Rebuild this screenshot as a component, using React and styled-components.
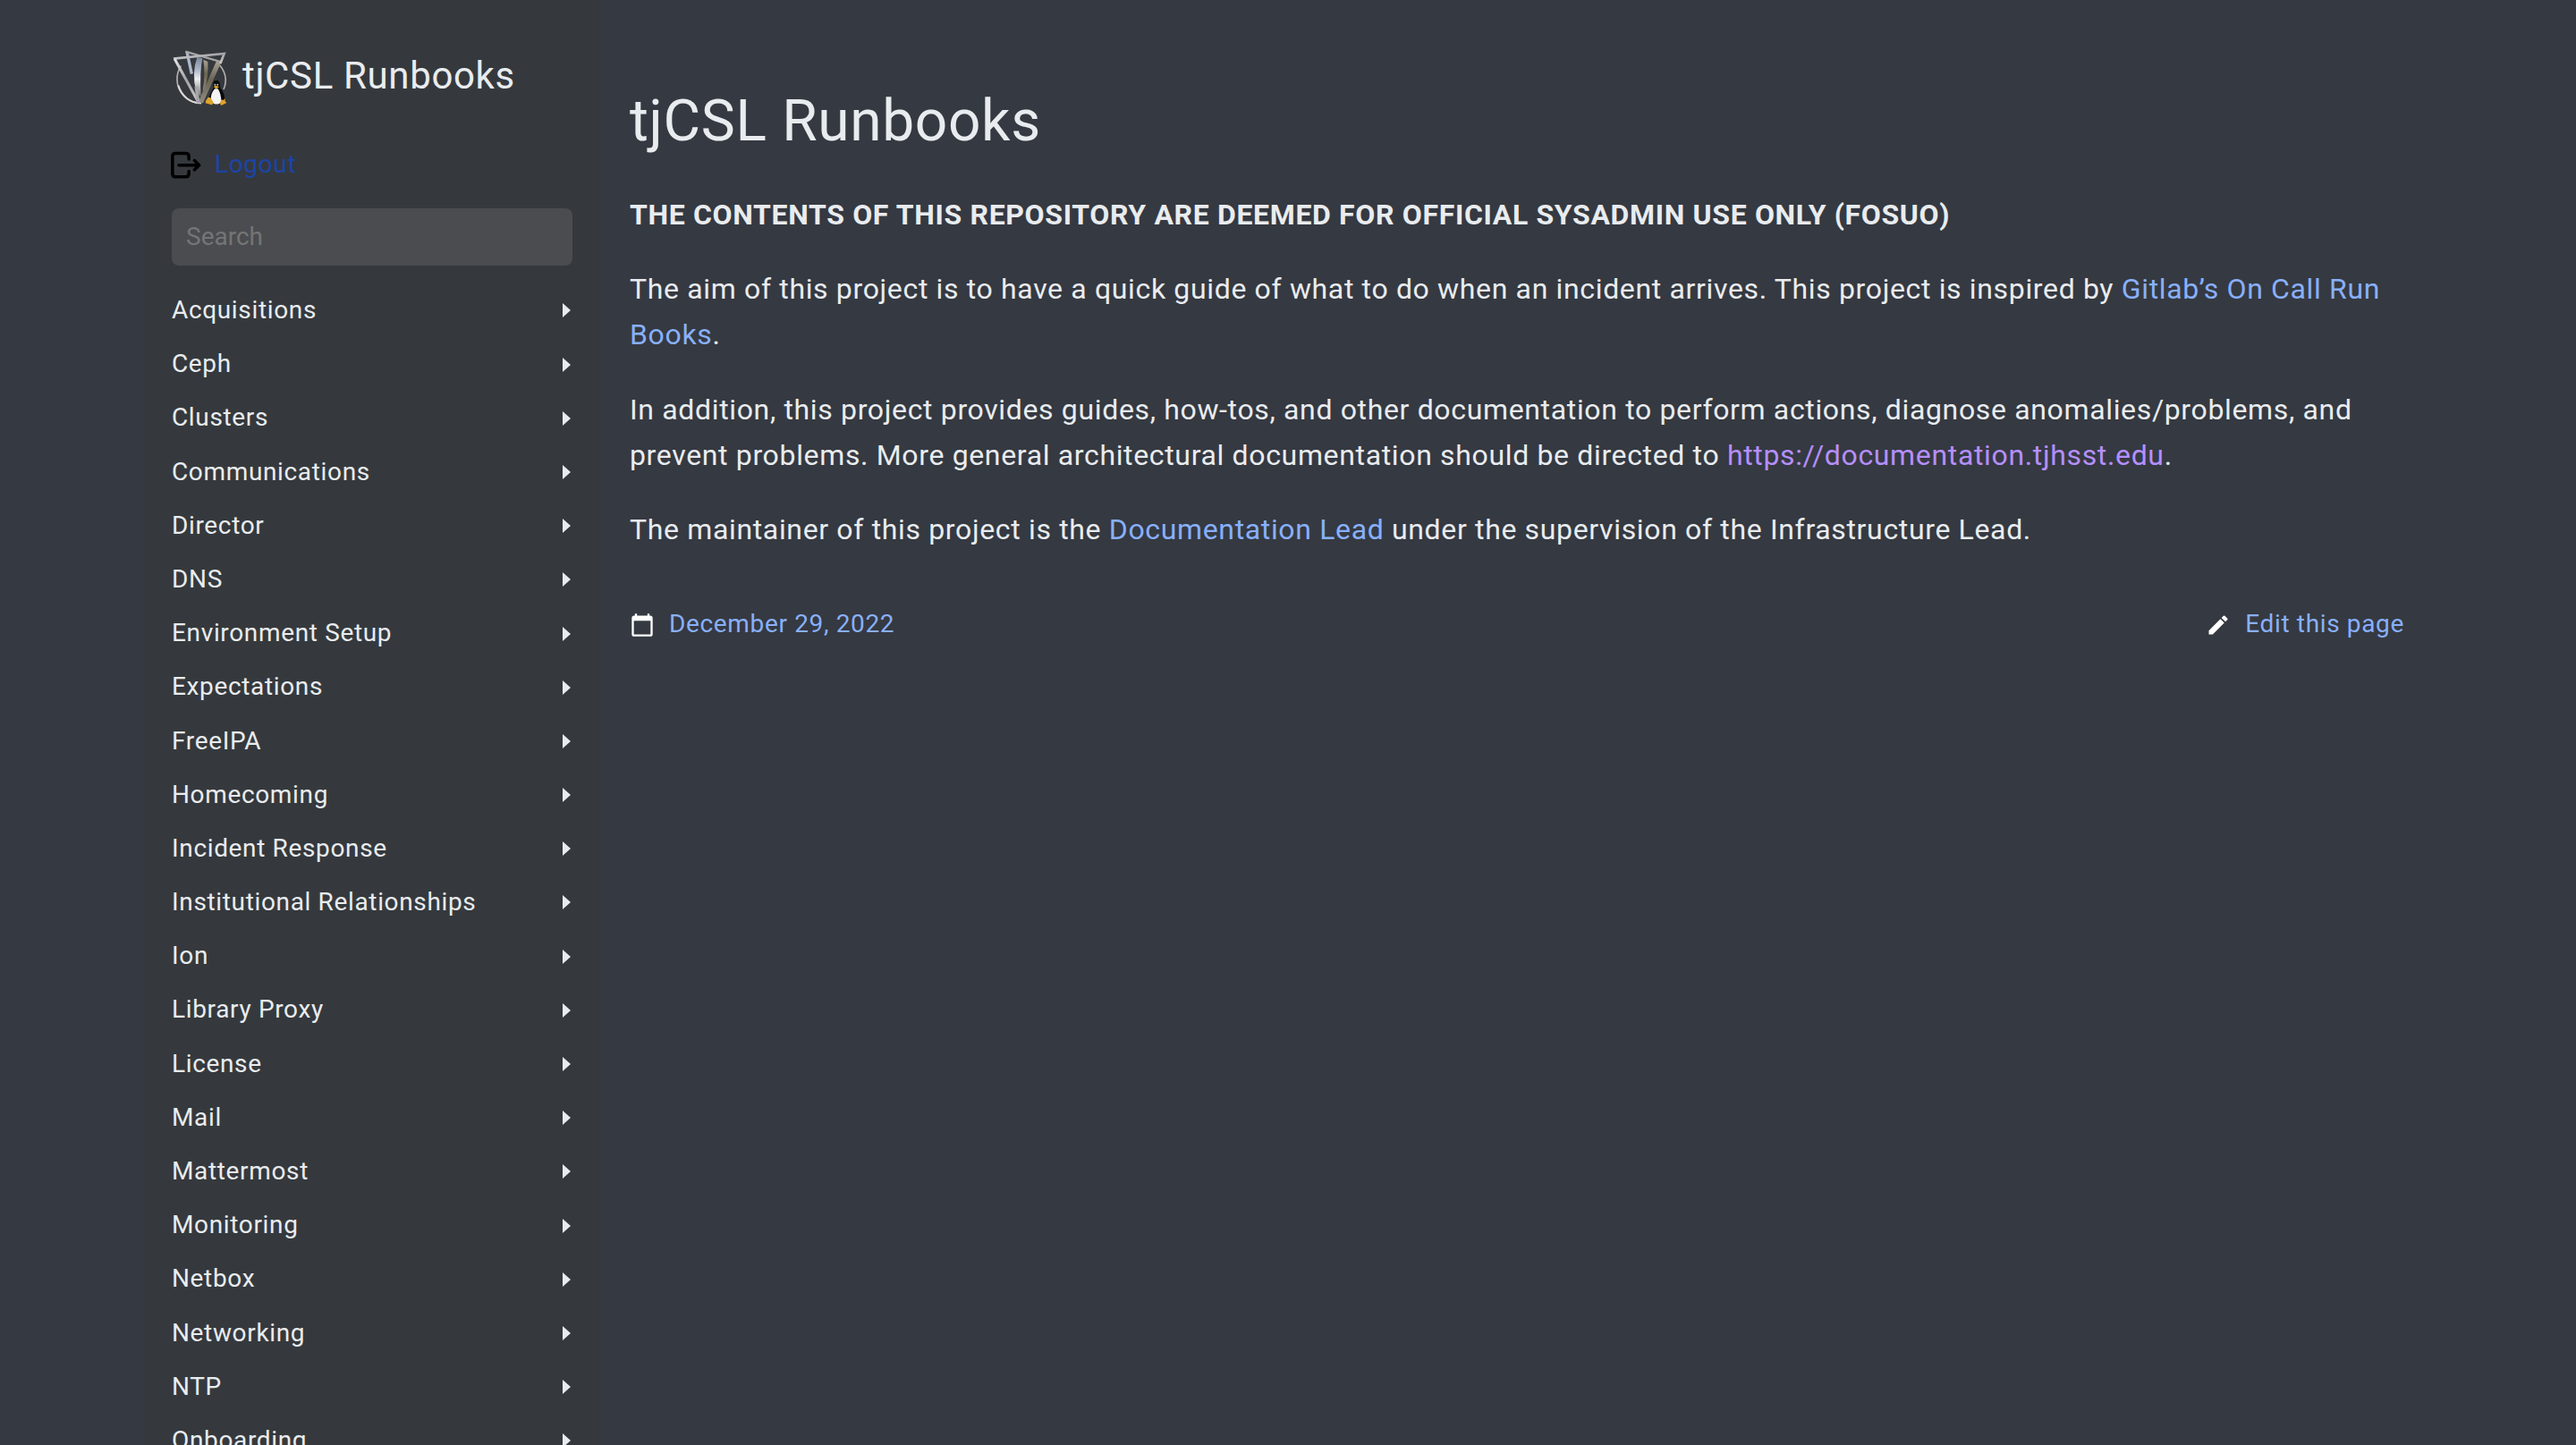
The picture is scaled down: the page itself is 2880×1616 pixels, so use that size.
import React from "react";
import styled, { createGlobalStyle } from "styled-components";

const GlobalStyle = createGlobalStyle`
  *, *::before, *::after { box-sizing: border-box; }
  html { font-size: 32px; }
  body {
    margin: 0;
    height: 1616px;
    overflow: hidden;
    background: #353941;
    color: #e9ecef;
    font-family: Roboto, "Open Sans", sans-serif;
    font-weight: 400;
    letter-spacing: 0.65px;
    line-height: 1.6;
  }
`;

const Page = styled.main`
  display: flex;
  width: 2560px;
  height: 1616px;
  margin: 0 auto;
  overflow: hidden;
`;

const Sidebar = styled.aside`
  flex: 0 0 512px;
  padding: 32px;
  font-size: 28px;
  background: #35393d;
`;

const Brand = styled.h2`
  display: flex;
  align-items: center;
  gap: 17px;
  margin: 16px 0 0;
  height: 74px;
  font-size: 42px;
  font-weight: 400;
  line-height: 74px;
  svg { margin-top: 2px; }
`;

const Logout = styled.a`
  display: flex;
  align-items: center;
  gap: 15px;
  height: 45px;
  margin: 40px 0 0 -1px;
  color: #1c44a8;
`;

const Search = styled.input`
  display: block;
  width: 100%;
  height: 64px;
  margin: 26px 0 28px;
  padding: 0 16px 2px;
  border: 0;
  border-radius: 8px;
  background: #4a4c50;
  font: 400 28px Roboto, sans-serif;
  &::placeholder { color: #757575; opacity: 1; }
`;

const Menu = styled.ul`
  margin: 0;
  padding: 0;
  list-style: none;
`;

const MenuRow = styled.li`
  display: flex;
  align-items: center;
  justify-content: space-between;
  height: 44.8px;
  margin-bottom: 15.4px;
  padding-right: 2px;
`;

const Arrow = styled.span`
  width: 0;
  height: 0;
  border-left: 9px solid #e9ecef;
  border-top: 8px solid transparent;
  border-bottom: 8px solid transparent;
`;

const Content = styled.article`
  flex: 1;
  padding: 32px;
  font-size: 32px;
`;

const Title = styled.h1`
  margin: 56px 0 0;
  font-size: 64px;
  font-weight: 400;
  line-height: 96px;
`;

const Paragraph = styled.p`
  margin: ${(p) => (p.$lead ? "31px" : "32px")} 0 32px;
`;

const Link = styled.a`
  color: ${(p) => (p.$visited ? "#b58ffc" : "#88b0fb")};
`;

const Footer = styled.footer`
  display: flex;
  justify-content: space-between;
  margin-top: 57px;
  font-size: 28px;
  line-height: 45px;
`;

const FooterItem = styled.div`
  display: flex;
  align-items: center;
  gap: 16px;
  svg { margin-top: 2px; }
`;

const names = [
  "Acquisitions", "Ceph", "Clusters", "Communications", "Director", "DNS",
  "Environment Setup", "Expectations", "FreeIPA", "Homecoming",
  "Incident Response", "Institutional Relationships", "Ion", "Library Proxy",
  "License", "Mail", "Mattermost", "Monitoring", "Netbox", "Networking",
  "NTP", "Onboarding",
];

const Logo = () => (
  <svg width="62" height="64" viewBox="21 27 186 192" fill="none">
    <defs>
      <linearGradient id="steel" x1="0" y1="0" x2="1" y2="1">
        <stop offset="0" stopColor="#e4e5e8" />
        <stop offset="0.5" stopColor="#a3a3a7" />
        <stop offset="1" stopColor="#cfcdca" />
      </linearGradient>
      <linearGradient id="band" x1="0" y1="0" x2="0" y2="1">
        <stop offset="0" stopColor="#7d8798" />
        <stop offset="0.3" stopColor="#a9b4c6" />
        <stop offset="0.55" stopColor="#eceef1" />
        <stop offset="1" stopColor="#77726a" />
      </linearGradient>
      <linearGradient id="bronze" x1="0" y1="0" x2="0" y2="1">
        <stop offset="0" stopColor="#aaa499" />
        <stop offset="0.45" stopColor="#6b6452" />
        <stop offset="1" stopColor="#8f8b80" />
      </linearGradient>
    </defs>
    <path d="M52 86A81 81 0 0 0 39 132C39 169 72 212 120 212M182 84A81 81 0 0 1 202 132Q202 150 195 165" stroke="#b3afaf" strokeWidth="5" />
    <path d="M43 152C54 188 82 211 120 210" stroke="#dfd9dc" strokeWidth="6" />
    <path d="M72 39L88 113" stroke="#aeb8ca" strokeWidth="10" />
    <path d="M67 38L184 72" stroke="#a8a7a8" strokeWidth="7" />
    <path d="M127 65L142 72C144 102 141 131 133 159L125 172Q134 108 127 65Z" fill="url(#bronze)" />
    <path d="M170 72L190 67L126 211L109 209Z" fill="url(#bronze)" />
    <path d="M106 57L124 60Q114 106 119 190L102 172Q88 108 106 57Z" fill="url(#band)" />
    <path d="M27 62L197 45L184 78" stroke="url(#steel)" strokeWidth="8" />
    <path d="M31 63L110 207" stroke="url(#steel)" strokeWidth="9" />
    <path d="M103 155L110 211" stroke="#a5a5a9" strokeWidth="11" />
    <path d="M172 135C160 133 158 145 161 159C155 174 144 184 148 205C160 217 187 220 197 207C202 188 193 171 184 161C183 145 183 137 172 135Z" fill="#08090b" />
    <path d="M165 163C155 176 149 189 155 206C164 218 181 217 187 206C187 188 183 174 176 163Z" fill="#f4f4f5" />
    <circle cx="166" cy="149" r="3" fill="#c8c8c8" />
    <circle cx="175" cy="149" r="3" fill="#c8c8c8" />
    <path d="M161 156L170 152L180 157L170 163Z" fill="#e5ad25" />
    <path d="M143 191L151 193L162 211L155 217L134 211L136 202Z" fill="#dfa42b" />
    <path d="M186 199L194 201L199 195L200 205L205 210L188 218L183 215Z" fill="#dfa42b" />
  </svg>
);

const LogoutIcon = () => (
  <svg width="34" height="32" viewBox="0 0 34 32" fill="none" stroke="#000" strokeWidth="3.6" strokeLinecap="round" strokeLinejoin="round">
    <path d="M20.2 9V6Q20.2 2.5 16.7 2.5H5.3Q1.8 2.5 1.8 6V25Q1.8 28.8 5.3 28.8H16.7Q20.2 28.8 20.2 25V22.5" />
    <path d="M9 15.7H31M26.5 10.6L31.6 15.7L26.5 20.8" />
  </svg>
);

const CalendarIcon = () => (
  <svg width="28" height="28" viewBox="0 0 24 24" fill="#fff">
    <path d="M20 3h-1V1h-2v2H7V1H5v2H4c-1.1 0-2 .9-2 2v16c0 1.1.9 2 2 2h16c1.1 0 2-.9 2-2V5c0-1.1-.9-2-2-2zm0 18H4V8h16v13z" />
  </svg>
);

const PencilIcon = () => (
  <svg width="28" height="28" viewBox="0 0 24 24" fill="#fff">
    <path d="M3 17.25V21h3.75L17.81 9.94l-3.75-3.75L3 17.25zM20.71 7.04a1 1 0 0 0 0-1.41l-2.34-2.34a1 1 0 0 0-1.41 0l-1.83 1.83 3.75 3.75 1.83-1.83z" />
  </svg>
);

export default function App() {
  return (
    <>
      <GlobalStyle />
      <Page>
        <Sidebar>
          <Brand><Logo /><span>tjCSL Runbooks</span></Brand>
          <Logout><LogoutIcon /><span>Logout</span></Logout>
          <Search placeholder="Search" />
          <Menu>
            {names.map((name) => (
              <MenuRow key={name}><span>{name}</span><Arrow /></MenuRow>
            ))}
          </Menu>
        </Sidebar>
        <Content>
          <Title>tjCSL Runbooks</Title>
          <Paragraph $lead><strong>THE CONTENTS OF THIS REPOSITORY ARE DEEMED FOR OFFICIAL SYSADMIN USE ONLY (FOSUO)</strong></Paragraph>
          <Paragraph>The aim of this project is to have a quick guide of what to do when an incident arrives. This project is inspired by <Link>Gitlab’s On Call Run Books</Link>.</Paragraph>
          <Paragraph>In addition, this project provides guides, how-tos, and other documentation to perform actions, diagnose anomalies/problems, and prevent problems. More general architectural documentation should be directed to <Link $visited>https://documentation.tjhsst.edu</Link>.</Paragraph>
          <Paragraph>The maintainer of this project is the <Link>Documentation Lead</Link> under the supervision of the Infrastructure Lead.</Paragraph>
          <Footer>
            <FooterItem><CalendarIcon /><Link>December 29, 2022</Link></FooterItem>
            <FooterItem><PencilIcon /><Link>Edit this page</Link></FooterItem>
          </Footer>
        </Content>
      </Page>
    </>
  );
}
